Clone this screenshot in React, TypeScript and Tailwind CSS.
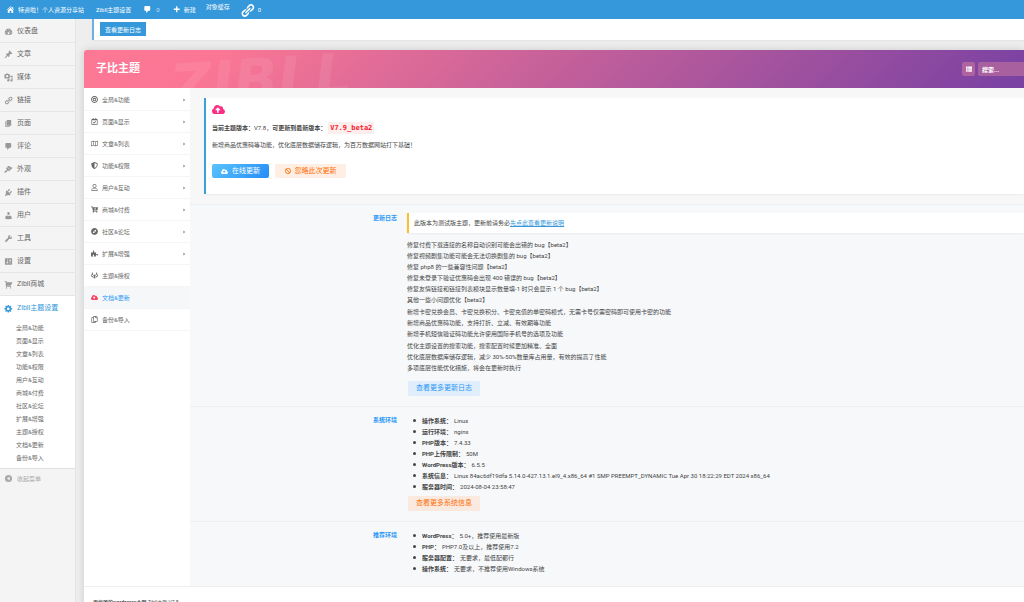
import type { ComponentType, ReactNode } from 'react'
import {
  FaAngleRight,
  FaBan,
  FaBullseye,
  FaCartArrowDown,
  FaCloudUploadAlt,
  FaCompass,
  FaGitlab,
  FaPuzzlePiece,
  FaRegCalendarCheck,
  FaRegCopy,
  FaRegMap,
  FaRegUser,
  FaShieldAlt,
  FaThList,
} from 'react-icons/fa'

type IconType = ComponentType<{ className?: string }>

// WordPress style glyphs, all on a 20x20 grid
const GLYPHS = {
  dashboard:
    'M4 17h12a8 8 0 1 0-12 0zM10 5a1 1 0 1 1 0 2 1 1 0 0 1 0-2zM6 6.600a1 1 0 1 1 0 2 1 1 0 0 1 0-2zM14.600 7.200l-3 5.500a2 2 0 1 1-1.200-.8zM4.500 10.500a1 1 0 1 1 0 2 1 1 0 0 1 0-2zM15.500 10.500a1 1 0 1 1 0 2 1 1 0 0 1 0-2z',
  post: 'M10.44 3.02l1.82-1.82 6.36 6.35-1.83 1.82c-1.05-.68-2.48-.57-3.41.36l-.75.75c-.92.93-1.04 2.35-.35 3.41l-1.83 1.82-2.41-2.41-2.8 2.79c-.42.42-3.38 2.71-3.8 2.29s1.86-3.39 2.28-3.81l2.79-2.79L4.1 9.36l1.83-1.82c1.05.69 2.48.57 3.4-.36l.75-.75c.93-.92 1.05-2.35.36-3.41z',
  media:
    'M13 11V4c0-.55-.45-1-1-1h-1.670L9 1H5L3.670 3H2c-.55 0-1 .45-1 1v7c0 .55.45 1 1 1h10c.55 0 1-.45 1-1zM7 4.500a2.500 2.500 0 1 1 0 5 2.500 2.500 0 0 1 0-5zM14 6h5v10.500c0 1.380-1.120 2.500-2.500 2.500S14 17.880 14 16.500s1.120-2.500 2.500-2.500c.17 0 .34.02.5.05V9h-3V6zm-4 8.050V13h2v3.500c0 1.380-1.120 2.500-2.500 2.500S7 17.880 7 16.500 8.120 14 9.500 14c.17 0 .34.02.5.05z',
  links:
    'M17.74 2.76c1.68 1.69 1.68 4.41 0 6.1l-1.53 1.52c-1.12 1.12-2.7 1.47-4.14 1.09l2.62-2.61.76-.77.76-.76c.84-.84.84-2.2 0-3.04-.84-.85-2.2-.85-3.04 0l-.77.76-3.38 3.38c-.37-1.44-.02-3.02 1.1-4.14l1.52-1.53c1.69-1.68 4.42-1.68 6.1 0zM8.59 13.43l5.34-5.34c.42-.42.42-1.1 0-1.52-.44-.43-1.13-.39-1.53 0l-5.33 5.34c-.42.42-.42 1.1 0 1.52.44.43 1.13.39 1.52 0zm-.76 2.29l4.14-4.15c.38 1.44.03 3.02-1.09 4.14l-1.52 1.53c-1.69 1.68-4.41 1.68-6.1 0-1.68-1.68-1.68-4.42 0-6.1l1.53-1.52c1.12-1.12 2.7-1.47 4.14-1.1l-4.14 4.15c-.85.84-.85 2.2 0 3.05.84.84 2.2.84 3.04 0z',
  page: 'M6 15V2h10v13H6zm-1 1h8v2H3V5h2v11z',
  comments: 'M5 2h9c1.1 0 2 .9 2 2v7c0 1.1-.9 2-2 2h-2l-5 5v-5H5c-1.1 0-2-.9-2-2V4c0-1.1.9-2 2-2z',
  appearance:
    'M14.48 11.06L7.41 3.99l1.5-1.5c.5-.56 2.3-.47 3.51.32 1.21.8 1.43 1.28 2.91 2.1 1.18.64 2.45 1.26 4.45.85zm-.71.71L6.7 4.7 4.93 6.47c-.39.39-.39 1.02 0 1.41l1.06 1.06c.39.39.39 1.03 0 1.42-.6.6-1.43 1.11-2.21 1.69-.35.26-.7.53-1.01.84C1.43 14.23.4 16.08 1.4 17.07c.99 1 2.84-.03 4.18-1.36.31-.31.58-.66.85-1.02.57-.78 1.08-1.61 1.69-2.21.39-.39 1.02-.39 1.41 0l1.06 1.06c.39.39 1.02.39 1.41 0z',
  plugins:
    'M13.11 4.36L9.87 7.6 8 5.73l3.24-3.24c.35-.34 1.05-.2 1.56.32.52.51.66 1.21.31 1.55zm-8 1.77l.91-1.12 9.01 9.01-1.19.84c-.71.71-2.63 1.16-3.82 1.16H6.14L4.9 17.26c-.59.59-1.54.59-2.12 0-.59-.58-.59-1.53 0-2.12l1.24-1.24v-3.88c0-1.13.4-3.19 1.09-3.89zm7.26 3.97l3.24-3.24c.34-.35 1.04-.21 1.55.31.52.51.66 1.21.31 1.55l-3.24 3.25z',
  users:
    'M10 9.25c-2.27 0-2.73-3.44-2.73-3.44C7 4.02 7.82 2 9.97 2c2.16 0 2.98 2.02 2.71 3.81 0 0-.41 3.44-2.68 3.44zm0 2.57L12.72 10c2.39 0 4.52 2.33 4.52 4.53v2.49s-3.65 1.13-7.24 1.13c-3.65 0-7.24-1.13-7.24-1.13v-2.49c0-2.25 1.94-4.48 4.47-4.48z',
  tools:
    'M16.68 9.77c-1.34 1.34-3.3 1.67-4.95.99l-5.41 6.52c-.99.99-2.59.99-3.58 0s-.99-2.59 0-3.57l6.52-5.42c-.68-1.65-.35-3.61.99-4.95 1.28-1.28 3.12-1.62 4.72-1.06l-2.89 2.89 2.82 2.82 2.86-2.87c.53 1.58.18 3.39-1.08 4.65zM3.81 16.21c.4.39 1.04.39 1.43 0 .4-.4.4-1.04 0-1.43-.39-.4-1.03-.4-1.43 0-.39.39-.39 1.03 0 1.43z',
  settings:
    'M18 16V4c0-.55-.45-1-1-1H3c-.55 0-1 .45-1 1v12c0 .55.45 1 1 1h14c.55 0 1-.45 1-1zM8 11h1c.55 0 1 .45 1 1s-.45 1-1 1H8v1.5c0 .28-.22.5-.5.5s-.5-.22-.5-.5V13H6c-.55 0-1-.45-1-1s.45-1 1-1h1V5.5c0-.28.22-.5.5-.5s.5.22.5.5V11zm5-2h-1c-.55 0-1-.45-1-1s.45-1 1-1h1V5.500c0-.28.22-.5.5-.5s.5.22.5.5V7h1c.55 0 1 .45 1 1s-.45 1-1 1h-1v5.500c0 .28-.22.5-.5.5s-.5-.22-.5-.5V9z',
  cart: 'M6 13h9c.55 0 1 .45 1 1s-.45 1-1 1H5c-.55 0-1-.45-1-1V4H2c-.55 0-1-.45-1-1s.45-1 1-1h3c.55 0 1 .45 1 1v2h13l-4 7H6v1zm-.5 3c.83 0 1.5.67 1.5 1.5S6.33 19 5.5 19 4 18.33 4 17.5 4.67 16 5.5 16zm9 0c.83 0 1.5.67 1.5 1.5s-.67 1.5-1.5 1.5-1.5-.67-1.5-1.5.67-1.5 1.5-1.5z',
  generic:
    'M18 12h-2.18c-.17.7-.44 1.35-.81 1.93l1.54 1.54-2.1 2.1-1.54-1.54c-.58.36-1.23.63-1.91.79V19H8v-2.18c-.68-.16-1.33-.43-1.91-.79l-1.54 1.54-2.12-2.12 1.54-1.54c-.36-.58-.63-1.23-.79-1.91H1V9.03h2.17c.16-.7.44-1.35.8-1.94L2.43 5.55l2.1-2.1 1.54 1.54c.58-.37 1.24-.64 1.93-.81V2h3v2.18c.68.16 1.33.43 1.91.79l1.54-1.54 2.12 2.12-1.54 1.54c.36.59.64 1.24.8 1.94H18V12zm-8.5 1.5c1.66 0 3-1.34 3-3s-1.34-3-3-3-3 1.34-3 3 1.34 3 3 3z',
  collapse: 'M10 2a8 8 0 1 1 0 16 8 8 0 0 1 0-16zM12.500 14V6L6.500 10z',
  home: 'M16 8.5l1.53 1.53-1.06 1.06L10 4.6l-6.47 6.49-1.06-1.06L10 2.5l4 4v-2h2v4zm-6-2.46l6 5.99V18h-4v-5H8v5H4v-5.970z',
  plus: 'M17 8v3h-5v5H9v-5H4V8h5V3h3v5h5z',
}

function Glyph({ name, className }: { name: keyof typeof GLYPHS; className?: string }) {
  return (
    <svg viewBox="0 0 20 20" fill="currentColor" fillRule="evenodd" aria-hidden="true" className={className}>
      <path d={GLYPHS[name]} />
    </svg>
  )
}

const adminMenu: { label: string; icon: keyof typeof GLYPHS }[] = [
  { label: '仪表盘', icon: 'dashboard' },
  { label: '文章', icon: 'post' },
  { label: '媒体', icon: 'media' },
  { label: '链接', icon: 'links' },
  { label: '页面', icon: 'page' },
  { label: '评论', icon: 'comments' },
  { label: '外观', icon: 'appearance' },
  { label: '插件', icon: 'plugins' },
  { label: '用户', icon: 'users' },
  { label: '工具', icon: 'tools' },
  { label: '设置', icon: 'settings' },
  { label: 'Zibll商城', icon: 'cart' },
]

const themeMenu: { label: string; icon: IconType; arrow?: boolean }[] = [
  { label: '全局&功能', icon: FaBullseye, arrow: true },
  { label: '页面&显示', icon: FaRegCalendarCheck, arrow: true },
  { label: '文章&列表', icon: FaRegMap, arrow: true },
  { label: '功能&权限', icon: FaShieldAlt, arrow: true },
  { label: '用户&互动', icon: FaRegUser, arrow: true },
  { label: '商城&付费', icon: FaCartArrowDown, arrow: true },
  { label: '社区&论坛', icon: FaCompass, arrow: true },
  { label: '扩展&增强', icon: FaPuzzlePiece, arrow: true },
  { label: '主题&授权', icon: FaGitlab },
  { label: '文档&更新', icon: FaCloudUploadAlt },
  { label: '备份&导入', icon: FaRegCopy },
]

const ACTIVE = '文档&更新'

const changelog = [
  [
    '修复付费下载连接的名称自动识别可能会出错的 bug【beta2】',
    '修复视频剧集功能可能会无法切换剧集的 bug【beta2】',
    '修复 php8 的一些兼容性问题【beta2】',
    '修复未登录下验证优惠码会出现 400 错误的 bug【beta2】',
    '修复友情链接和链接列表模块显示数量填-1 时只会显示 1 个 bug【beta2】',
    '其他一些小问题优化【beta2】',
  ],
  [
    '新增卡密兑换会员、卡密兑换积分、卡密充值的单密码模式，无需卡号仅需密码即可使用卡密的功能',
    '新增商品优惠码功能，支持打折、立减、有效期等功能',
    '新增手机短信验证码功能允许使用国际手机号的选项及功能',
  ],
  [
    '优化主题设置的搜索功能，搜索配置时候更加精准、全面',
    '优化底层数据库储存逻辑，减少 30%-50%数量库占用量，有效的提高了性能',
    '多项底层性能优化措施，将会在更新时执行',
  ],
]

const systemInfo = [
  ['操作系统', 'Linux'],
  ['运行环境', 'nginx'],
  ['PHP版本', '7.4.33'],
  ['PHP上传限制', '50M'],
  ['WordPress版本', '6.5.5'],
  ['系统信息', 'Linux 84ac6df19dfa 5.14.0-427.13.1.el9_4.x86_64 #1 SMP PREEMPT_DYNAMIC Tue Apr 30 18:22:29 EDT 2024 x86_64'],
  ['服务器时间', '2024-08-04 23:58:47'],
]

const recommended = [
  ['WordPress', '5.0+，推荐使用最新版'],
  ['PHP', 'PHP7.0及以上，推荐使用7.2'],
  ['服务器配置', '无要求，最低配都行'],
  ['操作系统', '无要求，不推荐使用Windows系统'],
]

function AdminBar() {
  return (
    <header className="flex h-5 items-center bg-[#3498db] pl-1.5 text-[6px] text-white">
      <a href="#" className="flex items-center gap-[3px]">
        <Glyph name="home" className="size-[9px]" />
        特资啦！个人资源分享站
      </a>
      <a href="#" className="ml-3">Zibll主题设置</a>
      <a href="#" className="ml-3 flex items-center gap-1">
        <Glyph name="comments" className="size-[9px]" />
        <span className="text-white/70">0</span>
      </a>
      <a href="#" className="ml-3 flex items-center gap-[3px]">
        <Glyph name="plus" className="size-[9px]" />
        新建
      </a>
      <a href="#" className="mb-[6px] ml-[10px]">对象缓存</a>
      <a href="#" className="ml-[10px] flex items-center gap-[3px]">
        <Glyph name="links" className="mt-[2px] size-[15px]" />
        0
      </a>
    </header>
  )
}

function AdminMenu() {
  return (
    <nav className="w-[76px] shrink-0 border-r border-[#e4e4e4] bg-[#f4f4f4] pt-px text-[7px] text-[#686868]">
      {adminMenu.map((item) => (
        <a key={item.label} href="#" className="flex h-[23px] items-center gap-1 border-b border-[#e6e6e6] pl-1">
          <Glyph name={item.icon} className="size-[9px] text-[#999]" />
          {item.label}
        </a>
      ))}
      <div className="border-b border-[#e0e0e0] bg-white pb-1">
        <a href="#" className="flex h-6 items-center gap-1 pl-1 text-[#3498db]">
          <Glyph name="generic" className="size-[9px]" />
          Zibll主题设置
        </a>
        <div className="pt-px">
          {themeMenu.map((item) => (
            <a key={item.label} href="#" className="block pl-4 text-[6px] leading-[13px]">
              {item.label}
            </a>
          ))}
        </div>
      </div>
      <button className="flex h-[18px] items-center gap-1 pl-1 text-[6px] text-[#aaa]">
        <Glyph name="collapse" className="size-[9px]" />
        收起菜单
      </button>
    </nav>
  )
}

function ThemeHeader() {
  return (
    <div className="relative flex h-[38px] items-center justify-between overflow-hidden rounded-tl-[3px] bg-linear-[135deg,#fc7895_0%,#fa7694_15%,#7841a3_100%] pl-3 text-white">
      <span className="absolute top-1 left-[86px] -rotate-4 font-['DejaVu_Sans'] text-[58px] leading-[52px] font-bold text-white/8 italic select-none">
        ZIBLL
      </span>
      <h1 className="text-[11px] font-bold">子比主题</h1>
      <div className="flex h-[14px] gap-[3px] text-[6px]">
        <button aria-label="展开全部" className="flex w-[13px] items-center justify-center rounded-[2px] bg-[#b0649f]">
          <FaThList className="size-[6px]" />
        </button>
        <input
          aria-label="搜索"
          placeholder="搜索..."
          className="w-[46px] rounded-l-[2px] bg-[#a9609f] px-1 font-bold placeholder:text-white"
        />
      </div>
    </div>
  )
}

function ThemeNav() {
  return (
    <nav className="w-[106px] shrink-0 bg-white pt-px text-[6px] text-[#666]">
      {themeMenu.map(({ label, icon: Icon, arrow }) => {
        const active = label === ACTIVE
        return (
          <a
            key={label}
            href="#"
            className={`flex h-[22px] items-center gap-1 border-b border-[#f5f5f5] pr-1 pl-[7px] ${
              active ? 'bg-[#f5f7f9] text-[#2997f7]' : ''
            }`}
          >
            <Icon className={`size-[7px] ${active ? 'text-[#fc3c5c]' : ''}`} />
            <span className="grow">{label}</span>
            {arrow && <FaAngleRight className="size-1" />}
          </a>
        )
      })}
    </nav>
  )
}

function Row({ title, children }: { title: string; children: ReactNode }) {
  return (
    <section className="flex gap-[10px] border-t border-[#eceff1] bg-[#f6f8fa] pl-[183px]">
      <h2 className="mt-[7px] w-6 shrink-0 leading-[11px] font-bold whitespace-nowrap text-[#2997f7]">{title}</h2>
      <div className="min-w-0 grow">{children}</div>
    </section>
  )
}

function InfoList({ items }: { items: string[][] }) {
  return (
    <ul className="pl-[6px] leading-[11px]">
      {items.map(([name, value]) => (
        <li
          key={name}
          className="flex items-center before:mr-[6px] before:size-[3px] before:rounded-full before:bg-[#444]"
        >
          <b>{name}：</b>
          <span className="ml-[2px]">{value}</span>
        </li>
      ))}
    </ul>
  )
}

export default function App() {
  return (
    <div className="flex h-screen flex-col overflow-hidden bg-[#eee] font-['Roboto','Noto_Sans_CJK_SC',sans-serif] text-[6px] text-[#444]">
      <AdminBar />
      <div className="flex min-h-0 grow">
        <AdminMenu />
        <main className="min-w-0 grow pl-2">
          <div className="ml-2 flex h-[21px] items-start border-l-2 border-[#72aee6] bg-white pt-[3px] pl-[6px] shadow-xs">
            <button className="h-[14px] bg-[#3498db] px-[5px] text-[6px] text-white">查看更新日志</button>
          </div>

          <div className="mt-[10px] rounded-tl-[3px] shadow-[0_0_8px_rgba(0,0,0,0.15)]">
            <ThemeHeader />
            <div className="flex bg-white">
              <ThemeNav />
              <div className="min-w-0 grow bg-[#f7f7f7]">
                <div className="py-[10px] pl-[14px]">
                  <div className="border-l-2 border-[#3aa2d8] bg-white pt-[5px] pb-4 pl-[6px] shadow-xs">
                    <FaCloudUploadAlt className="size-[13px] text-[#fd2d83]" />
                    <p className="mt-[5px] leading-[13px]">
                      <b>当前主题版本：</b>V7.8，<b>可更新到最新版本：</b>
                      <code className="ml-[2px] bg-[#fdeeee] px-[2px] py-[2px] font-['DejaVu_Sans_Mono',monospace] text-[7px] font-bold text-[#f7202c]">
                        V7.9_beta2
                      </code>
                    </p>
                    <p className="mt-1 leading-[12px]">新增商品优惠码等功能，优化底层数据储存逻辑，为百万数据网站打下基础！</p>
                    <div className="mt-[13px] flex gap-[6px] text-[7px]">
                      <button className="flex h-[14px] w-[57px] items-center justify-center gap-1 rounded-[2px] bg-linear-[135deg,#59c3fb,#268df7] text-white">
                        <FaCloudUploadAlt className="size-[7px]" />
                        在线更新
                      </button>
                      <button className="flex h-[14px] w-[71px] items-center justify-center gap-1 rounded-[2px] bg-[#ffeee3] text-[#ff6f06]">
                        <FaBan className="size-[6px]" />
                        忽略此次更新
                      </button>
                    </div>
                  </div>
                </div>

                <Row title="更新日志">
                  <div className="mt-2 border-l-2 border-[#fbc02d] bg-white pl-[5px] leading-5 shadow-xs">
                    此版本为测试版主题，更新前请务必
                    <a href="#" className="text-[#3498db] underline">先点此查看更新说明</a>
                  </div>
                  <div className="mt-[6px] flex flex-col gap-px leading-[11px]">
                    {changelog.map((group) => (
                      <div key={group[0]}>
                        {group.map((line) => (
                          <p key={line}>{line}</p>
                        ))}
                      </div>
                    ))}
                  </div>
                  <button className="mt-2 mb-[10px] ml-[1px] block h-[15px] w-[72px] rounded-[2px] bg-[#e0edfa] text-[7px] text-[#2997f7]">
                    查看更多更新日志
                  </button>
                </Row>

                <Row title="系统环境">
                  <div className="pt-2">
                    <InfoList items={systemInfo} />
                  </div>
                  <button className="mt-1 mb-[10px] ml-[1px] block h-[15px] w-[72px] rounded-[2px] bg-[#fae9df] text-[7px] text-[#ff6f06]">
                    查看更多系统信息
                  </button>
                </Row>

                <Row title="推荐环境">
                  <div className="pt-2 pb-3">
                    <InfoList items={recommended} />
                  </div>
                </Row>
              </div>
            </div>
            <footer className="h-10 border-t border-[#eee] bg-white pt-[11px] pl-[9px] text-[5px] leading-[9px] text-[#555]">
              <b>更优雅的wordpress主题</b> Zibll主题 V7.8
            </footer>
          </div>
        </main>
      </div>
    </div>
  )
}
